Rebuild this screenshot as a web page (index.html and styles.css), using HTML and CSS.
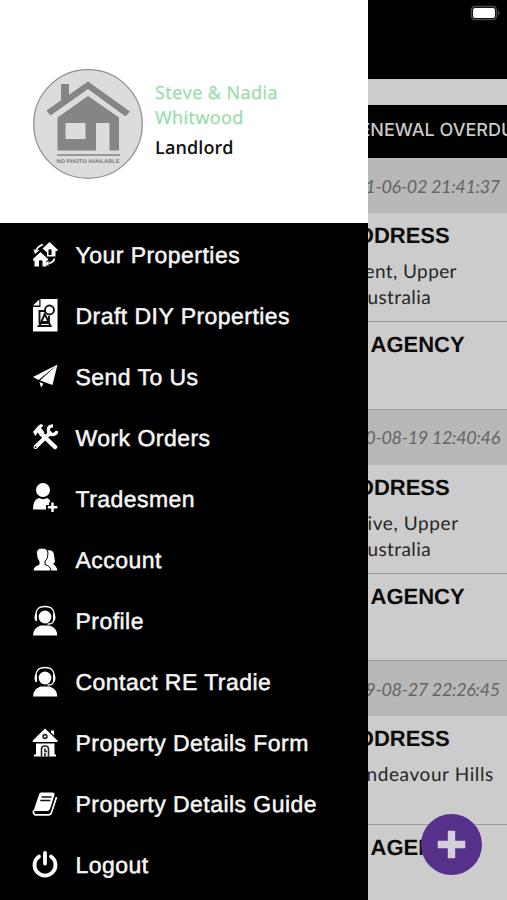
FILE: index.html
```
<!DOCTYPE html>
<html lang="en">
<head>
<meta charset="utf-8">
<title>RE Tradie</title>
<link rel="stylesheet" href="styles.css">
</head>
<body>
<div class="app">
  <aside class="drawer">
    <header class="account">
      <svg class="avatar" viewBox="0 0 110 110">
        <circle cx="55" cy="55" r="54.3" fill="#dcdcdc" stroke="#929292" stroke-width="1.3"/>
        <path fill="#858585" d="M28 15h8v14l-8 6zM55 12.500 97 42.500 92.500 47.500 55 20 17.500 46.500 13.500 41.500z"/>
        <path fill="#858585" fill-rule="evenodd" d="M55 27 86 48.500V81.500H76.500V54H63V81.500H24.500V48.500zM32.500 54V70H52.500V54z"/>
        <path stroke="#858585" stroke-width="1.5" d="M24 86h63"/>
        <text x="23.500" y="93.500" textLength="63" lengthAdjust="spacingAndGlyphs">NO PHOTO AVAILABLE</text>
      </svg>
      <div class="identity">
        <div class="name">Steve &amp; Nadia<br>Whitwood</div>
        <div class="role">Landlord</div>
      </div>
    </header>
    <nav class="menu">
      <a class="item"><svg class="icon" viewBox="0 0 26 34"><path fill="#fff" fill-rule="evenodd" d="M17.500 4 25.500 11.500v1.500H23.500V18.500H15V14.500L10.500 10.500zM16.500 11.500V17h3v-5.500zM8.500 14l7.500 7v1.500H14.500V28.500H2.500v-6H1V21zM7 22.500v6h3.500v-6z"/><path fill="none" stroke="#fff" stroke-width="1.700" d="M3.500 14Q5 8.500 11 6.500M16.500 25.500q5-1 6-5"/><path fill="#fff" d="M1.500 11.500l6 .5-4.500 4zM16.500 22.500v5.500l-3-2z"/><path stroke="#000" stroke-width="1" d="M8.700 22.500v6M18 11.500v5.500"/></svg><span>Your Properties</span></a>
      <a class="item"><svg class="icon" viewBox="0 0 26 34"><path fill="#fff" d="M8.500 0H25.500V32.500H1V8H8.500z"/><path fill="#fff" d="M1 6.500 7.300.5v6z"/><g fill="none" stroke="#111" stroke-width="1.900"><path d="M13 12H7.500V24H17V17"/><circle cx="17.500" cy="11" r="4.500"/><path d="M7.500 27 12.700 15 18.500 27zM9.500 23h7M5.500 27h14"/></g></svg><span>Draft DIY Properties</span></a>
      <a class="item"><svg class="icon" viewBox="0 0 26 34"><path fill="#fff" d="M25.500 4.500 1 17 6.500 20zM25.500 4.500 8 20.500 20.500 25zM7.500 22 11.500 23.700 9 27.500z"/></svg><span>Send To Us</span></a>
      <a class="item"><svg class="icon" viewBox="0 0 26 34"><path stroke="#fff" stroke-width="4.500" stroke-linecap="round" d="M9.500 13 23 26"/><path stroke="#fff" stroke-width="4" stroke-linecap="round" d="M3.500 26 18 12"/><path fill="#fff" d="M1 11 6.500 4.500 9 3 11.500 4.500 9 7 12.500 11.500 9 15 5.500 11.500 3.500 15z"/><path fill="none" stroke="#fff" stroke-width="3.300" d="M21 4.800q-5 0-4.500 4.700 0 4.500 4.500 4 3.500-.3 4-3.500"/><circle cx="3.500" cy="26" r="1" fill="#222"/></svg><span>Work Orders</span></a>
      <a class="item"><svg class="icon" viewBox="0 0 26 34"><circle cx="11" cy="8" r="7" fill="#fff"/><path fill="#fff" d="M1 27.500Q1 17.500 7 16q4 2.300 8 0 3 1 3.500 4H17v3h-3v4.500z"/><path fill="none" stroke="#fff" stroke-width="2.500" d="M20.500 20.500v9.500M15.800 25.200h9.500"/></svg><span>Tradesmen</span></a>
      <a class="item"><svg class="icon" viewBox="0 0 26 34"><path fill="#fff" d="M15 6.500Q21.500 5 22 11l1 7-2 2q4 2.500 4.300 6.500H12z"/><path fill="#fff" stroke="#000" stroke-width="1" d="M1 27Q1 22 7 20.500v-3Q4.300 14 4.500 8.500 5 4 10 4q5.500 0 6 5 .3 5.500-3 8.500v3q5.500 1.500 6 6.500z"/></svg><span>Account</span></a>
      <a class="item"><svg class="icon" viewBox="0 0 26 34"><circle cx="13" cy="12" r="6.400" fill="#fff"/><path fill="none" stroke="#fff" stroke-width="1.300" d="M4 12Q3 1.500 13 1.500t9 10.500M21.500 15.500q0 3.500-6 3.500"/><path fill="#fff" d="M5 8.500v7.500H3.500q-2-3.500 0-7.500zM21 8.500v7.500h1.500q2-3.500 0-7.500zM1 30.500Q1.500 22.500 8.500 20.500h9Q25 22.500 25.300 30.500z"/></svg><span>Profile</span></a>
      <a class="item"><svg class="icon" viewBox="0 0 26 34"><circle cx="13" cy="12" r="6.400" fill="#fff"/><path fill="none" stroke="#fff" stroke-width="1.300" d="M4 12Q3 1.500 13 1.500t9 10.500M21.500 15.500q0 3.500-6 3.500"/><path fill="#fff" d="M5 8.500v7.500H3.500q-2-3.500 0-7.500zM21 8.500v7.500h1.500q2-3.500 0-7.500zM1 30.500Q1.500 22.500 8.500 20.500h9Q25 22.500 25.300 30.500z"/></svg><span>Contact RE Tradie</span></a>
      <a class="item"><svg class="icon" viewBox="0 0 26 34"><path fill="#fff" d="M13 1.500 25.500 13.500V15H.8V13.500zM19 3.500h3v5l-3-3zM4 16.500h18.500v11H24V29.500H2V27.500h2z"/><circle cx="13" cy="9.500" r="1.900" fill="none" stroke="#222" stroke-width="1.600"/><path fill="none" stroke="#222" stroke-width="1.600" d="M9.500 29.500V22q0-3 3.500-3t3.500 3v7.500M13 21.500v3h2M13 26v3.500"/></svg><span>Property Details Form</span></a>
      <a class="item"><svg class="icon" viewBox="0 0 26 34"><path fill="#fff" d="M9 4.500H20.500q2.500 0 2 2.500L18 21q-1 2-3 2H1.500L7 6.500Q7.500 4.500 9 4.500z"/><path fill="none" stroke="#fff" stroke-width="1.700" d="M24.500 9 19.500 24.500q-.8 2.300-3 2.300H4Q1 26.800 1.500 22.500"/><path stroke="#111" stroke-width="1.400" d="M9.500 9h10M8.300 12.500h10"/></svg><span>Property Details Guide</span></a>
      <a class="item"><svg class="icon" viewBox="0 0 26 34"><path fill="none" stroke="#fff" stroke-width="3.800" stroke-linecap="round" d="M7 7.500a10.500 10.500 0 1 0 12 0M13 4v10.500"/></svg><span>Logout</span></a>
    </nav>
  </aside>
  <main class="page">
    <div class="statusbar">
      <svg class="battery" viewBox="0 0 32 16"><rect x="1.500" y="1.500" width="25" height="13" rx="3.500" fill="none" stroke="#4a4a4a" stroke-width="1.500"/><rect x="3" y="3" width="22" height="10" rx="2" fill="#fff"/><path fill="#4a4a4a" d="M28 5.500q3 2.500 0 5z"/></svg>
    </div>
    <div class="banner"><span>ENEWAL OVERDUE</span></div>
    <section class="card">
      <div class="date">1-06-02 21:41:37</div>
      <div class="address"><h2>DDRESS</h2><p class="line1">ent, Upper</p><p class="line2">ustralia</p></div>
      <div class="agency"><h2>AGENCY</h2></div>
    </section>
    <section class="card">
      <div class="date">0-08-19 12:40:46</div>
      <div class="address"><h2>DDRESS</h2><p class="line1 drive">ive, Upper</p><p class="line2">ustralia</p></div>
      <div class="agency"><h2>AGENCY</h2></div>
    </section>
    <section class="card">
      <div class="date">9-08-27 22:26:45</div>
      <div class="address"><h2>DDRESS</h2><p class="line3">ndeavour Hills</p></div>
      <div class="agency"><h2>AGENCY</h2></div>
    </section>
  </main>
  <button class="add" aria-label="Add"><svg viewBox="0 0 62 62"><path stroke="#d4cfd8" stroke-width="7.500" d="M31 17v28M17 31h28"/></svg></button>
</div>
</body>
</html>
```
FILE: styles.css
```
* { box-sizing: border-box; margin: 0; padding: 0; }
body { background: #ccc; text-rendering: geometricPrecision; }
.app {
  position: relative;
  display: grid;
  grid-template-columns: 367.5px 1fr;
  width: 507px;
  height: 900px;
  overflow: hidden;
}
.drawer { height: 900px; background: #000; z-index: 1; }
.account {
  display: flex;
  gap: 12px;
  height: 223px;
  padding: 69px 0 0 33px;
  background: #fff;
}
.avatar { width: 110px; height: 110px; flex: none; }
.avatar text { font: bold 5.5px "Liberation Sans", sans-serif; fill: #777; }
.identity { padding-top: 12px; font-family: "Open Sans", sans-serif; font-size: 18px; white-space: nowrap; }
.name { line-height: 25px; color: #9adcae; letter-spacing: .45px; -webkit-text-stroke: .3px #9adcae; }
.role { margin-top: 5px; line-height: 25px; color: #111; font-weight: 600; letter-spacing: .1px; }
.menu { padding-top: 1.5px; }
.item {
  display: flex;
  align-items: center;
  gap: 17.5px;
  height: 61.1px;
  padding-left: 32px;
  color: #f6f6f6;
  font-family: "Liberation Sans", sans-serif;
  font-size: 23px;
  letter-spacing: .46px;
  white-space: nowrap;
  -webkit-text-stroke: .5px #f6f6f6;
}
.icon { width: 26px; height: 34px; flex: none; -webkit-text-stroke: 0; }
.page { overflow: hidden; height: 900px; white-space: nowrap; }
.statusbar { display: flex; justify-content: flex-end; height: 79px; padding: 5px 5px 0 0; background: #000; }
.battery { width: 32px; height: 16px; }
.banner {
  display: flex;
  height: 53px;
  margin-top: 26px;
  align-items: center;
  background: #000;
  color: #c9c9c9;
  font: 500 18px Inter, sans-serif;
}
.banner span { margin: -3px 0 0 -8px; }
.card { height: 251.5px; border-bottom: 1.5px solid #999; color: #0b0b0b; }
.date {
  display: flex;
  align-items: center;
  justify-content: flex-end;
  height: 55px;
  padding-right: 7px;
  background: #b8b8b8;
  color: #656565;
  font: italic 18px Lato, sans-serif;
  letter-spacing: -.32px;
}
.address { height: 109px; padding-top: 9px; border-bottom: 1.5px solid #999; }
.card h2 { font: bold 22px/27px "Liberation Sans", sans-serif; }
.address h2 { margin-left: -9.5px; }
.address p { font: 19px/26px Lato, sans-serif; color: #262626; letter-spacing: .4px; }
.address .line1 { margin: 10px 0 0 -3px; }
.address .drive { margin-left: 0; letter-spacing: .6px; }
.address .line2 { margin-left: 0; }
.address .line3 { margin: 10px 0 0 -1px; letter-spacing: .6px; }
.agency { padding: 9px 0 0 3px; }
.add {
  position: absolute;
  z-index: 2;
  right: 25px;
  top: 814px;
  width: 61px;
  height: 61px;
  border: 0;
  border-radius: 50%;
  background: #56308a;
}
.add svg { display: block; width: 61px; height: 61px; }
```
